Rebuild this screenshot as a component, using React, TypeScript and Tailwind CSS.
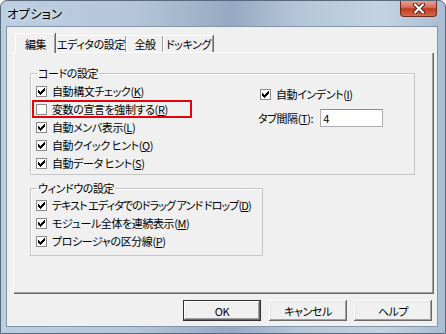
import React from "react";

const CHECK: [number, number, number][] = [
  [6, 0, 1],
  [5, 1, 2],
  [0, 2, 1],
  [4, 2, 3],
  [0, 3, 2],
  [3, 3, 3],
  [0, 4, 5],
  [1, 5, 3],
  [2, 6, 1],
];

function Box({ checked }: { checked: boolean }) {
  return (
    <span className="w-[11px] h-[11px] bg-white border border-[#8a8a8a] flex items-center justify-center shrink-0">
      {checked && (
        <svg width="7" height="7" viewBox="0 0 7 7" shapeRendering="crispEdges">
          {CHECK.map(([x, y, w], i) => (
            <rect key={i} x={x} y={y} width={w} height={1} fill="#000" />
          ))}
        </svg>
      )}
    </span>
  );
}

function Row({ checked, text, k, tight }: { checked: boolean; text: string; k: string; tight?: boolean }) {
  return (
    <div className="h-[18px] flex items-center pl-[5px]">
      <Box checked={checked} />
      <span className={"ml-[5px] whitespace-nowrap " + (tight ? "tracking-[-0.9px]" : "")}>
        {text}(<u>{k}</u>)
      </span>
    </div>
  );
}

function Btn({ children, def }: { children: React.ReactNode; def?: boolean }) {
  return (
    <div
      className={
        "w-[78px] h-[21px] flex items-center justify-center bg-[#f0f0f0] whitespace-nowrap " +
        (def
          ? "border border-[#303030] shadow-[inset_-1px_-1px_#696969,inset_1px_1px_#fff,inset_-2px_-2px_#a0a0a0]"
          : "shadow-[inset_-1px_-1px_#696969,inset_1px_1px_#fff,inset_-2px_-2px_#a0a0a0,inset_2px_2px_#e3e3e3]")
      }
    >
      {children}
    </div>
  );
}

export default function App() {
  return (
    <div className="w-[446px] h-[334px] overflow-hidden rounded-t-[7px] border border-[#5a6a7e] bg-[linear-gradient(to_right,#bccfe2_0%,#b3c6da_30%,#94a9c1_52%,#b3c5d8_66%,#c3d3e4_86%,#a9bcd1_100%)] font-['Noto_Sans_CJK_JP','Noto_Sans',sans-serif] [font-feature-settings:'palt'] text-[11px] tracking-[-0.4px] leading-[14px] text-black">
      <div className="h-[26px] flex items-start">
        <span className="ml-[6px] mt-[5px] text-[12.5px] leading-[16px] tracking-[0px] [text-shadow:0_0_6px_#fff]">
          オプション
        </span>
        <div className="ml-auto mr-[8px] w-[37px] h-[17px] -mt-[1px] rounded-b-[4px] border border-[#6b2a20] border-t-0 bg-[linear-gradient(to_bottom,#e9a898_0%,#d7705c_45%,#c2391f_55%,#d46a4f_100%)] flex items-center justify-center">
          <svg width="12" height="11" viewBox="0 0 12 11">
            <path d="M2 1.5 L10 9.5 M10 1.5 L2 9.5" stroke="#4a1d14" strokeWidth="4" strokeLinecap="round" />
            <path d="M2 1.5 L10 9.5 M10 1.5 L2 9.5" stroke="#fff" strokeWidth="2.2" strokeLinecap="round" />
          </svg>
        </div>
      </div>

      <div className="ml-[6px] w-[430px] h-[299px] bg-[#f0f0f0] shadow-[0_0_0_1px_#8595a8] pt-[6px] flex flex-col">
        <div className="ml-[8px] h-[19px] flex items-end">
          <div className="relative z-10 w-[40px] h-[20px] -mb-[1px] bg-[#f0f0f0] border-l border-t border-white shadow-[inset_-1px_0_#a0a0a0,1px_0_#696969] flex items-center justify-center whitespace-nowrap">
            編集
          </div>
          <div className="w-[71px] h-[17px] border-l border-t border-white shadow-[inset_-1px_0_#a0a0a0,1px_0_#696969] flex items-center justify-center whitespace-nowrap">
            エディタの設定
          </div>
          <div className="w-[37px] h-[17px] border-l border-t border-white shadow-[inset_-1px_0_#a0a0a0,1px_0_#696969] flex items-center justify-center whitespace-nowrap">
            全般
          </div>
          <div className="w-[50px] h-[17px] border-l border-t border-white shadow-[inset_-1px_0_#a0a0a0,1px_0_#696969] flex items-center justify-center whitespace-nowrap">
            ドッキング
          </div>
        </div>

        <div className="ml-[6px] w-[420px] h-[241px] border-l border-t border-white shadow-[inset_-1px_-1px_#a0a0a0,1px_1px_#696969] flex flex-col">
          <fieldset className="ml-[16px] mt-[13px] w-[385px] border border-[#c5c5c5] shadow-[inset_1px_1px_#fff] flex pb-[2px]">
            <legend className="ml-[6px] px-[1px] leading-[14px]">コードの設定</legend>
            <div className="w-[227px] flex flex-col pt-[2px]">
              <Row checked text="自動構文チェック" k="K" />
              <div className="ml-[1px] w-[160px] h-[18px] flex items-center pl-[4px] shadow-[inset_0_0_0_2px_#e8000b]">
                <Box checked={false} />
                <span className="ml-[5px] whitespace-nowrap">
                  変数の宣言を強制する(<u>R</u>)
                </span>
              </div>
              <Row checked text="自動メンバ表示" k="L" />
              <Row checked text="自動クイック ヒント" k="Q" />
              <Row checked text="自動データ ヒント" k="S" />
            </div>
            <div className="flex flex-col pt-[5px]">
              <div className="h-[18px] flex items-center pl-[2px]">
                <Box checked />
                <span className="ml-[5px] whitespace-nowrap">
                  自動インデント(<u>I</u>)
                </span>
              </div>
              <div className="mt-[6px] flex items-center">
                <span className="whitespace-nowrap">
                  タブ間隔(<u>T</u>):
                </span>
                <div className="ml-[7px] w-[63px] h-[18px] bg-white border border-[#abadb3] border-t-[#8e8f8f] flex items-center pl-[2px]">
                  4
                </div>
              </div>
            </div>
          </fieldset>

          <fieldset className="ml-[16px] mt-[6px] w-[233px] border border-[#c5c5c5] shadow-[inset_1px_1px_#fff] flex flex-col pt-[1px] pb-[5px]">
            <legend className="ml-[6px] px-[1px] leading-[14px]">ウィンドウの設定</legend>
            <Row checked tight text="テキスト エディタでのドラッグ アンド ドロップ" k="D" />
            <Row checked text="モジュール全体を連続表示" k="M" />
            <Row checked text="プロシージャの区分線" k="P" />
          </fieldset>
        </div>

        <div className="mt-[7px] flex">
          <div className="ml-auto">
            <Btn def>OK</Btn>
          </div>
          <div className="ml-[8px]">
            <Btn>キャンセル</Btn>
          </div>
          <div className="ml-[7px] mr-[5px]">
            <Btn>ヘルプ</Btn>
          </div>
        </div>
      </div>
    </div>
  );
}
